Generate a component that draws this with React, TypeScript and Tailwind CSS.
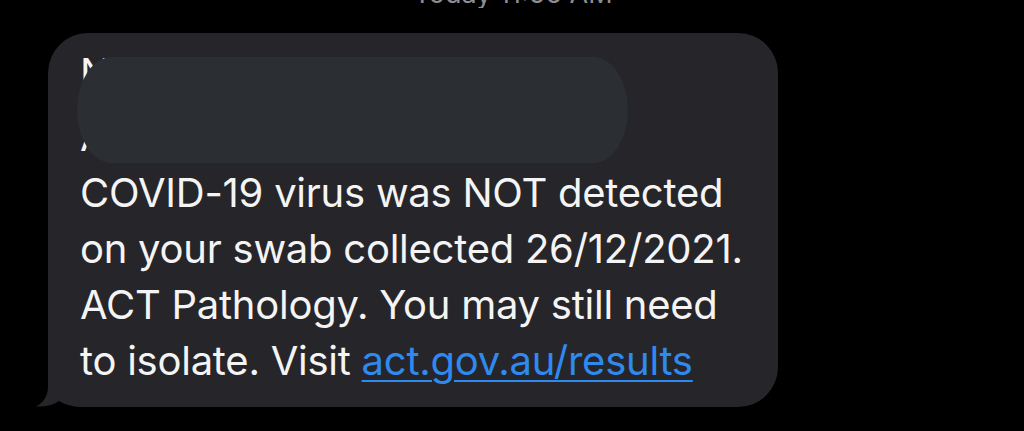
import React from "react";

export default function App() {
  const font = { fontFamily: 'Inter, "Noto Sans", sans-serif' };
  return (
    <div className="w-[1024px] h-[431px] bg-black overflow-hidden relative" style={font}>
      <div className="h-[8px] overflow-hidden flex justify-center">
        <div className="text-[27px] leading-[27px] text-[#8e8e93] -mt-[20px] ml-[2px]">Today 11:56 AM</div>
      </div>
      <div className="pt-[25px] pl-[48px]">
        <div className="relative w-[730px] h-[374px] bg-[#262529] rounded-[40px]">
          <svg className="absolute left-[-12px] bottom-0" width="56" height="42" viewBox="0 0 56 42">
            <path d="M12,0 L12,22 C12,31 7,38 0,41.5 C9,42 17,40 23,36 C30,40 38,42 48,42 L56,42 L56,0 Z" fill="#262529" />
          </svg>
          <div className="relative pl-[32px] pt-[12px] text-[40px] leading-[56px] text-[#f4f4f5] tracking-[-0.25px] whitespace-nowrap">
            <div className="h-[64px]">N</div>
            <div>A</div>
            <div>COVID-19 virus was NOT detected</div>
            <div>on your swab collected 26/12/2021.</div>
            <div>ACT Pathology. You may still need</div>
            <div>
              to isolate. Visit{" "}
              <span className="text-[#2f8af0] underline decoration-[2px] underline-offset-[5px]">act.gov.au/results</span>
            </div>
            <div className="absolute left-[29px] top-[24px] w-[551px] h-[106px] rounded-[35px/53px] bg-[#2b2f33]" />
          </div>
        </div>
      </div>
    </div>
  );
}
